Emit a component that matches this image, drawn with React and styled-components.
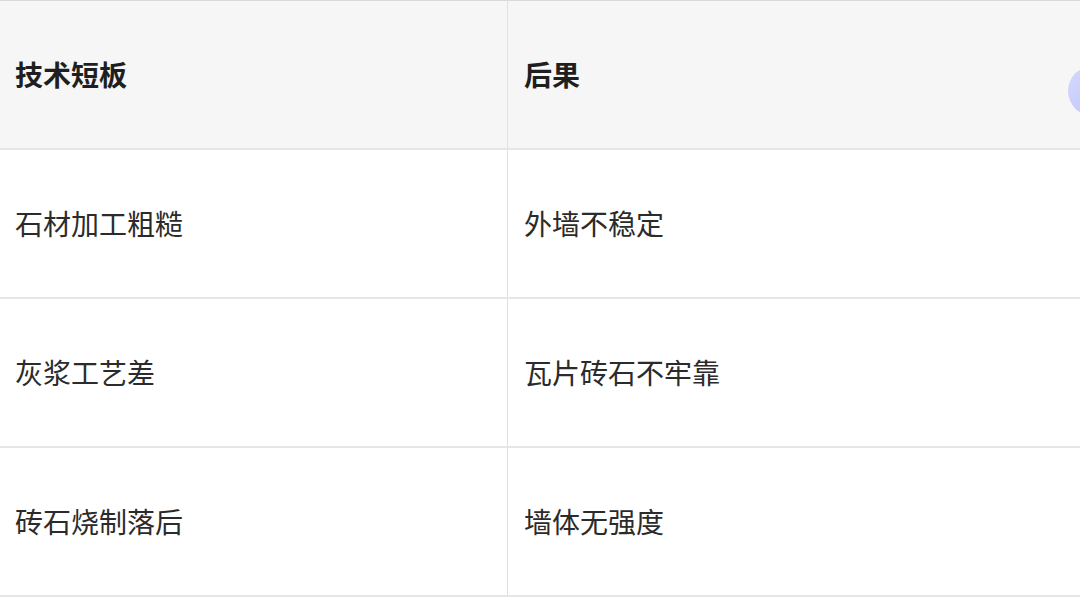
import React from "react";
import styled, {createGlobalStyle} from 'styled-components';

const GlobalStyle = createGlobalStyle`
  html, body {
    margin: 0;
    padding: 0;
    background: #ffffff;
    overflow: hidden;
  }
  body {
    font-family: "Noto Sans CJK SC", "Noto Sans", sans-serif;
  }
`;

const Page = styled.div`
  position: relative;
  width: 1080px;
  height: 597px;
  overflow: hidden;
`;

const Table = styled.table`
  width: 1080px;
  border-collapse: collapse;
  border-top: 1px solid #d9d9d9;
`;

const HeadRow = styled.tr`
  height: 148px;
  background: #f6f6f6;
  border-bottom: 2px solid #e6e6e6;
`;

const Row = styled.tr`
  height: 149px;
  border-bottom: 2px solid #e6e6e6;
`;

const HeadCell = styled.th`
  width: ${props => props.$w || 'auto'};
  padding: 0 0 0 ${props => props.$last ? '16px' : '15px'};
  text-align: left;
  vertical-align: middle;
  font-size: 28px;
  font-weight: 700;
  color: #1f1f1f;
  border-right: ${props => props.$last ? 'none' : '1px solid #e0e0e0'};
`;

const Cell = styled.td`
  padding: 0 0 0 ${props => props.$last ? '16px' : '15px'};
  vertical-align: middle;
  font-size: 28px;
  font-weight: 400;
  color: #2b2b2b;
  border-right: ${props => props.$last ? 'none' : '1px solid #e0e0e0'};
`;

// 오른쪽 끝에 걸친 둥근 버튼
const FloatDot = styled.div`
  position: absolute;
  left: 1068px;
  top: 66px;
  width: 50px;
  height: 50px;
  border-radius: 50%;
  background: linear-gradient(135deg, #d3d8fd 0%, #bfc6fb 100%);
`;

const rows = [
    ['石材加工粗糙', '外墙不稳定'],
    ['灰浆工艺差', '瓦片砖石不牢靠'],
    ['砖石烧制落后', '墙体无强度'],
];

const App = () => {
    return (
        <>
            <GlobalStyle/>
            <Page>
                <Table>
                    <thead>
                    <HeadRow>
                        <HeadCell $w="492px">技术短板</HeadCell>
                        <HeadCell $last>后果</HeadCell>
                    </HeadRow>
                    </thead>
                    <tbody>
                    {rows.map((r) => (
                        <Row key={r[0]}>
                            <Cell>{r[0]}</Cell>
                            <Cell $last>{r[1]}</Cell>
                        </Row>
                    ))}
                    </tbody>
                </Table>
                <FloatDot/>
            </Page>
        </>
    );
};

export default App;
